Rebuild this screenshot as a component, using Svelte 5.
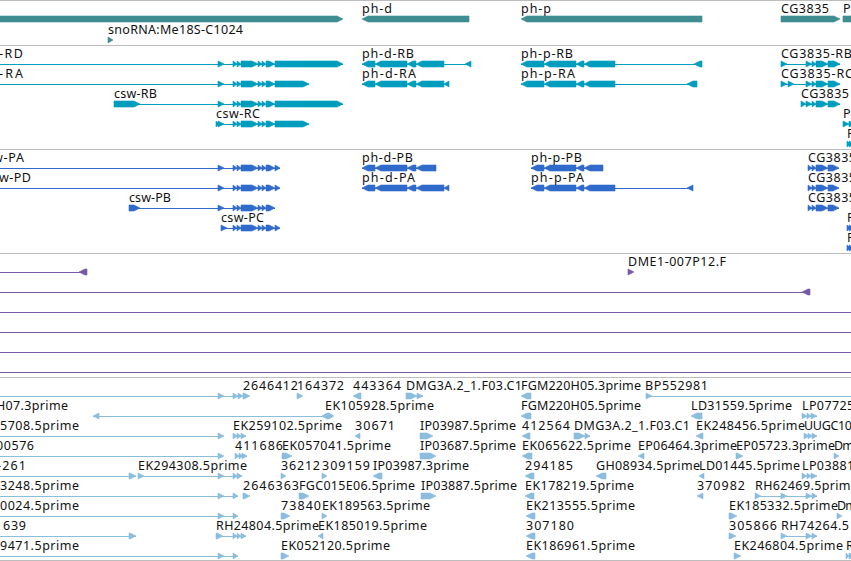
<script lang="ts">
  type Exon = [number, number]

  interface Feature {
    lane: number
    exons?: Exon[]
    dir?: 'l' | 'r' | 'both'
    label?: string
    // label start and end
    lx?: number
    end?: number
    // connector, defaults to the span of the exons
    line?: Exon
  }

  interface Track {
    name: string
    height: number
    color: string
    step: number
    features: Feature[]
  }

  const WIDTH = 851
  const TOP = 16

  function f(
    lane: number,
    dir: Feature['dir'],
    exons: Exon[],
    label?: string,
    lx?: number,
    end?: number,
    line?: Exon,
  ): Feature {
    return { lane, dir, exons, label, lx, end, line }
  }

  const cswMid: Exon[] = [[233, 237], [237, 241], [241, 258], [258, 262], [262, 266], [266, 275]]
  const csw: Exon[] = [[218, 224], ...cswMid]
  const phd: Exon[] = [[362, 375], [375, 407], [407, 416]]
  const php: Exon[] = [[544, 576], [576, 584]]
  const cg: Exon[] = [[812, 816], [816, 828]]
  const lp: Exon[] = [[802, 807], [807, 811], [811, 817]]

  const tracks: Track[] = [
    {
      name: 'gene',
      height: 45,
      color: '#3f8d92',
      step: 21,
      features: [
        f(0, 'r', [[-10, 343]]),
        f(0, 'l', [[362, 469]], 'ph-d', 362, 392),
        f(0, 'l', [[521, 702]], 'ph-p', 521, 551),
        f(0, 'r', [[781, 840]], 'CG3835', 781, 829),
        f(0, 'r', [[843, 900]], 'P', 843, 850),
        f(1, 'r', [[108, 113]], 'snoRNA:Me18S-C1024', 108, 243),
      ],
    },
    {
      name: 'transcript',
      height: 104,
      color: '#009dbf',
      step: 20,
      features: [
        f(0, 'r', [...csw, [275, 343]], '-RD', -1, 23, [0, 343]),
        f(1, 'r', [...csw, [275, 309]], '-RA', -1, 23, [0, 309]),
        f(2, 'r', [[114, 140], ...csw, [275, 343]], 'csw-RB', 114, 157),
        f(3, 'r', [[216, 219], ...csw, [275, 309]], 'csw-RC', 216, 260),
        f(0, 'l', [...phd, [416, 444], [465, 471]], 'ph-d-RB', 362, 414),
        f(1, 'l', [...phd, [416, 444], [444, 449]], 'ph-d-RA', 362, 416),
        f(0, 'l', [[521, 544], ...php, [584, 615], [694, 702]], 'ph-p-RB', 521, 573),
        f(1, 'l', [[521, 544], ...php, [584, 615], [687, 697]], 'ph-p-RA', 521, 575),
        f(0, 'r', [[781, 787], [806, 812], ...cg, [828, 840]], 'CG3835-RB', 781, 852),
        f(1, 'r', [[781, 787], [788, 794], [806, 812], ...cg, [828, 840]], 'CG3835-RC', 781, 853),
        f(2, 'r', [[801, 806], [806, 812], ...cg, [828, 840]], 'CG3835', 801, 849),
        f(3, 'r', [[843, 849], [849, 855]], 'P', 843, 850),
        f(4, 'r', [[847, 850], [849, 855]], 'P', 847, 855),
      ],
    },
    {
      name: 'cds',
      height: 104,
      color: '#306bcb',
      step: 20,
      features: [
        f(0, 'r', [...csw, [275, 280]], 'w-PA', -7, 24, [0, 280]),
        f(1, 'r', [...csw, [275, 280]], 'w-PD', -1, 31, [0, 280]),
        f(2, 'r', [[129, 140], ...csw], 'csw-PB', 129, 171),
        f(3, 'r', [[221, 227], ...cswMid, [275, 280]], 'csw-PC', 221, 264),
        f(0, 'l', [...phd, [416, 436]], 'ph-d-PB', 362, 413),
        f(1, 'l', [...phd, [416, 444], [444, 449]], 'ph-d-PA', 362, 415),
        f(0, 'l', [[531, 544], ...php, [584, 603]], 'ph-p-PB', 531, 582),
        f(1, 'l', [[531, 544], ...php, [584, 615], [687, 693]], 'ph-p-PA', 531, 584),
        f(0, 'r', [[808, 812], ...cg, [828, 839]], 'CG3835', 808, 856),
        f(1, 'r', [[808, 812], ...cg, [828, 839]], 'CG3835', 808, 856),
        f(2, 'r', [[808, 812], ...cg, [828, 839]], 'CG3835', 808, 856),
        f(3, 'r', [[847, 850], [849, 855]], 'P', 847, 855),
        f(4, 'r', [[847, 850], [849, 855]], 'P', 847, 855),
      ],
    },
    {
      name: 'bac',
      height: 124,
      color: '#7859a8',
      step: 20,
      features: [
        f(0, 'l', [[79, 87]], '', 0, 0, [0, 87]),
        f(0, 'r', [[628, 634]], 'DME1-007P12.F', 628, 726),
        f(1, 'l', [[802, 810]], '', 0, 0, [0, 810]),
        ...[2, 3, 4, 5].map((lane) => f(lane, 'r', [], '', 0, 0, [0, WIDTH])),
      ],
    },
    {
      name: 'est',
      height: 184,
      color: '#8bbddd',
      step: 20,
      features: [
        f(0, 'r', [[218, 224], [233, 238], [238, 243]], '', 0, 0, [0, 243]),
        f(0, 'r', [[243, 250]], '2646412', 243, 298),
        f(0, 'r', [[297, 303]], '164372', 297, 344),
        f(0, 'l', [[353, 361]], '443364', 353, 401),
        f(0, 'r', [[406, 417], [417, 423]], 'DMG3A.2_1.F03.C1', 406, 522),
        f(0, 'l', [[521, 531]], 'FGM220H05.3prime', 521, 641),
        f(0, 'r', [[646, 652]], 'BP552981', 645, 708, [646, WIDTH]),

        f(1, 'l', [[93, 99]], 'H07.3prime', -4, 68, [93, 324]),
        f(1, 'both', [[322, 334]], 'EK105928.5prime', 325, 434),
        f(1, 'l', [[521, 531]], 'FGM220H05.5prime', 521, 641),
        f(1, 'l', [[691, 702]], 'LD31559.5prime', 691, 792),
        f(1, 'r', lp, 'LP07725.5prime', 802, 902),

        f(2, 'r', [[218, 224]], '5708.5prime', 0, 79, [0, 223]),
        f(2, 'r', [[233, 237], [237, 241], [241, 246]], 'EK259102.5prime', 233, 342),
        f(2, 'l', [[355, 360]], '30671', 355, 395),
        f(2, 'r', [[420, 433]], 'IP03987.5prime', 420, 516),
        f(2, 'l', [[522, 530]], '412564', 522, 570),
        f(2, 'r', [[574, 585], [585, 590]], 'DMG3A.2_1.F03.C1', 574, 690),
        f(2, 'l', [[696, 703]], 'EK248456.5prime', 696, 805),
        f(2, 'r', [[804, 809], [808, 812], [812, 817]], 'UUGC10', 804, 852),

        f(3, 'r', [[218, 224]], '00576', -4, 34, [0, 223]),
        f(3, 'r', [[235, 239], [239, 243], [242, 247]], '411686', 235, 283),
        f(3, 'r', [[282, 292]], 'EK057041.5prime', 282, 391),
        f(3, 'r', [[420, 436]], 'IP03687.5prime', 420, 516),
        f(3, 'l', [[522, 532]], 'EK065622.5prime', 522, 631),
        f(3, 'l', [[638, 644]], 'EP06464.3prime', 638, 737),
        f(3, 'r', [[736, 743]], 'EP05723.3prime', 736, 835),
        f(3, 'r', [[834, 839]], 'Dm', 834, 854),

        f(4, 'r', [[129, 136]], '-261', -3, 26, [0, 136]),
        f(4, 'r', [[138, 144], [218, 224], [233, 237], [237, 242]], 'EK294308.5prime', 138, 247),
        f(4, 'r', [[281, 286]], '36212', 281, 320),
        f(4, 'r', [[322, 327]], '309159', 322, 370),
        f(4, 'l', [[373, 382]], 'IP03987.3prime', 373, 469),
        f(4, 'l', [[525, 534]], '294185', 525, 573),
        f(4, 'l', [[596, 606]], 'GH08934.5prime', 596, 700),
        f(4, 'l', [[699, 704]], 'LD01445.5prime', 699, 800),
        f(4, 'r', lp, 'LP03881.5prime', 802, 902),

        f(5, 'r', [[218, 224], [233, 238]], '3248.5prime', 0, 79, [0, 238]),
        f(5, 'r', [[243, 250]], '2646363', 243, 299),
        f(5, 'r', [[299, 309]], 'FGC015E06.5prime', 299, 415),
        f(5, 'r', [[421, 436]], 'IP03887.5prime', 421, 517),
        f(5, 'l', [[525, 534]], 'EK178219.5prime', 525, 634),
        f(5, 'l', [[697, 703]], '370982', 697, 745),
        f(5, 'r', [[755, 761], [781, 787], [806, 812], [812, 817]], 'RH62469.5prime', 755, 858),

        f(6, 'r', [[218, 224], [233, 238]], '0024.5prime', 0, 79, [0, 238]),
        f(6, 'r', [[281, 290]], '73840', 281, 321),
        f(6, 'r', [[322, 327]], 'EK189563.5prime', 322, 430),
        f(6, 'l', [[526, 535]], 'EK213555.5prime', 526, 635),
        f(6, 'r', [[729, 737]], 'EK185332.5prime', 729, 838),
        f(6, 'r', [[837, 842]], 'Dm', 837, 857),

        f(7, 'r', [[129, 136]], '1639', -5, 26, [0, 136]),
        f(7, 'r', [[216, 223], [233, 237], [237, 241], [241, 246]], 'RH24804.5prime', 216, 319),
        f(7, 'l', [[318, 323]], 'EK185019.5prime', 318, 427),
        f(7, 'l', [[526, 535]], '307180', 526, 574),
        f(7, 'r', [[729, 736]], '305866', 729, 777),
        f(7, 'r', [[781, 787], [806, 812], [812, 817]], 'RH74264.5', 781, 849),

        f(8, 'r', [[218, 224], [233, 238]], '9471.5prime', 0, 79, [0, 238]),
        f(8, 'r', [[281, 289]], 'EK052120.5prime', 281, 390),
        f(8, 'l', [[526, 535]], 'EK186961.5prime', 526, 635),
        f(8, 'r', [[734, 741]], 'EK246804.5prime', 734, 843),
        f(8, 'r', [[846, 849], [849, 855]], 'R', 846, 854),
      ],
    },
  ]

  function span(ft: Feature): Exon {
    if (ft.line) return ft.line
    const ex = ft.exons!
    return [ex[0][0], ex[ex.length - 1][1]]
  }

  function arrow([a, b]: Exon, dir: Feature['dir'], y: number) {
    const head = Math.min(6, b - a)
    const m = y + 3
    const l = y + 6
    if (dir === 'both') return `${a},${m} ${a + 5},${y} ${b - 5},${y} ${b},${m} ${b - 5},${l} ${a + 5},${l}`
    if (dir === 'l') return `${b},${y} ${a + head},${y} ${a},${m} ${a + head},${l} ${b},${l}`
    return `${a},${y} ${b - head},${y} ${b},${m} ${b - head},${l} ${a},${l}`
  }
</script>

<main class="browser">
  {#each tracks as track (track.name)}
    <section class="track">
      <svg width={WIDTH} height={track.height - 1} viewBox="0 1 {WIDTH} {track.height - 1}">
        {#each track.features as ft}
          {@const y = TOP + ft.lane * track.step}
          {@const [x1, x2] = span(ft)}
          <g fill={track.color} stroke={track.color}>
            {#if ft.line || ft.exons!.length > 1}
              <rect x={x1} y={y + 3} width={x2 - x1} height="1" stroke="none" />
            {/if}
            {#each ft.exons! as exon}
              <polygon points={arrow(exon, ft.dir, y)} />
            {/each}
          </g>
          {#if ft.label}
            <text x={ft.lx} y={y - 3} textLength={ft.end! - ft.lx!}>{ft.label}</text>
          {/if}
        {/each}
      </svg>
    </section>
  {/each}
</main>

<style>
  :global(body) {
    margin: 0;
    background: #fff;
    overflow: hidden;
  }

  .browser {
    width: 851px;
    height: 560px;
    border-bottom: 1px solid #bdbdbd;
    background: #fff;
  }

  .track {
    border-top: 1px solid #bdbdbd;
  }

  svg {
    display: block;
  }

  polygon {
    stroke-width: 0.6;
    stroke-linejoin: bevel;
  }

  text {
    font-family: 'Noto Sans', 'DejaVu Sans', sans-serif;
    font-size: 12.5px;
    fill: #111;
  }
</style>
